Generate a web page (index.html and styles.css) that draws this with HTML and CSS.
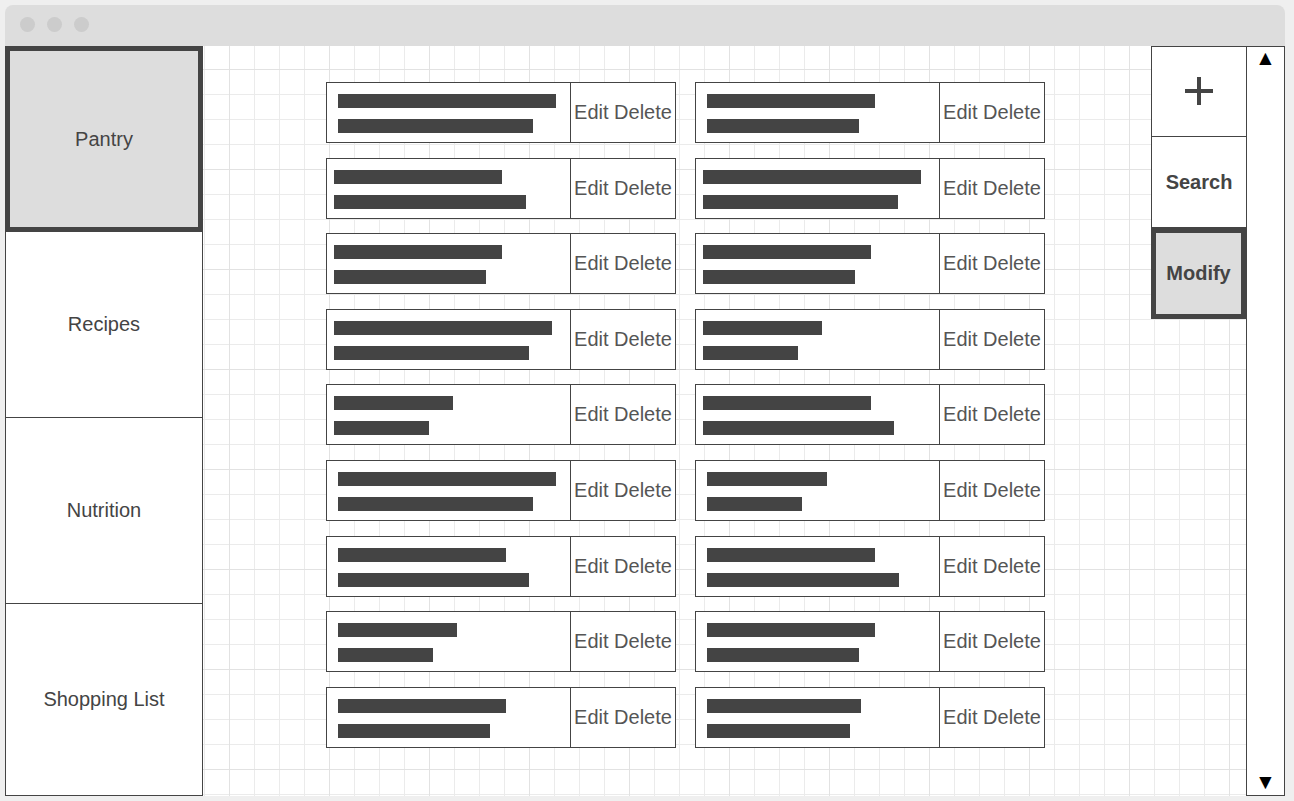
FILE: index.html
```html
<!DOCTYPE html>
<html lang="en">
<head>
    <meta charset="UTF-8">
    <meta name="viewport" content="width=device-width, initial-scale=1.0">
    <title>Pantry - Wireframe</title>
    <link rel="stylesheet" href="styles.css">
</head>
<body>
    <div class="window">
        <div class="titlebar">
            <span class="dot"></span>
            <span class="dot"></span>
            <span class="dot"></span>
        </div>
        <div class="frame">
            <nav class="sidebar">
                <div class="tab active">Pantry</div>
                <div class="tab">Recipes</div>
                <div class="tab">Nutrition</div>
                <div class="tab">Shopping List</div>
            </nav>

            <main class="content">
                <div class="list">
                    <!-- row 1 -->
                    <div class="card"><div class="info"><span class="bar" style="width:218px"></span><span class="bar" style="width:195px"></span></div><div class="actions">Edit Delete</div></div>
                    <div class="card"><div class="info"><span class="bar" style="width:168px"></span><span class="bar" style="width:152px"></span></div><div class="actions">Edit Delete</div></div>
                    <!-- row 2 -->
                    <div class="card"><div class="info tight"><span class="bar" style="width:168px"></span><span class="bar" style="width:192px"></span></div><div class="actions">Edit Delete</div></div>
                    <div class="card"><div class="info tight"><span class="bar" style="width:218px"></span><span class="bar" style="width:195px"></span></div><div class="actions">Edit Delete</div></div>
                    <!-- row 3 -->
                    <div class="card"><div class="info tight"><span class="bar" style="width:168px"></span><span class="bar" style="width:152px"></span></div><div class="actions">Edit Delete</div></div>
                    <div class="card"><div class="info tight"><span class="bar" style="width:168px"></span><span class="bar" style="width:152px"></span></div><div class="actions">Edit Delete</div></div>
                    <!-- row 4 -->
                    <div class="card"><div class="info tight"><span class="bar" style="width:218px"></span><span class="bar" style="width:195px"></span></div><div class="actions">Edit Delete</div></div>
                    <div class="card"><div class="info tight"><span class="bar" style="width:119px"></span><span class="bar" style="width:95px"></span></div><div class="actions">Edit Delete</div></div>
                    <!-- row 5 -->
                    <div class="card"><div class="info tight"><span class="bar" style="width:119px"></span><span class="bar" style="width:95px"></span></div><div class="actions">Edit Delete</div></div>
                    <div class="card"><div class="info tight"><span class="bar" style="width:168px"></span><span class="bar" style="width:191px"></span></div><div class="actions">Edit Delete</div></div>
                    <!-- row 6 -->
                    <div class="card"><div class="info"><span class="bar" style="width:218px"></span><span class="bar" style="width:195px"></span></div><div class="actions">Edit Delete</div></div>
                    <div class="card"><div class="info"><span class="bar" style="width:120px"></span><span class="bar" style="width:95px"></span></div><div class="actions">Edit Delete</div></div>
                    <!-- row 7 -->
                    <div class="card"><div class="info"><span class="bar" style="width:168px"></span><span class="bar" style="width:191px"></span></div><div class="actions">Edit Delete</div></div>
                    <div class="card"><div class="info"><span class="bar" style="width:168px"></span><span class="bar" style="width:192px"></span></div><div class="actions">Edit Delete</div></div>
                    <!-- row 8 -->
                    <div class="card"><div class="info"><span class="bar" style="width:119px"></span><span class="bar" style="width:95px"></span></div><div class="actions">Edit Delete</div></div>
                    <div class="card"><div class="info"><span class="bar" style="width:168px"></span><span class="bar" style="width:152px"></span></div><div class="actions">Edit Delete</div></div>
                    <!-- row 9 -->
                    <div class="card"><div class="info"><span class="bar" style="width:168px"></span><span class="bar" style="width:152px"></span></div><div class="actions">Edit Delete</div></div>
                    <div class="card"><div class="info"><span class="bar" style="width:154px"></span><span class="bar" style="width:143px"></span></div><div class="actions">Edit Delete</div></div>
                </div>
            </main>

            <aside class="tools">
                <div class="tool add">
                    <svg width="30" height="30" viewBox="0 0 30 30">
                        <rect x="1" y="12" width="28" height="4" fill="#444"/>
                        <rect x="13" y="0" width="4" height="28" fill="#444"/>
                    </svg>
                </div>
                <div class="tool">Search</div>
                <div class="tool active">Modify</div>
            </aside>

            <div class="scrollbar">
                <span>▲</span>
                <span>▼</span>
            </div>
        </div>
    </div>
</body>
</html>
```

FILE: styles.css
```css
html {
    background-color: #efefef;
}

body {
    font-family: "Liberation Sans", Arial, sans-serif;
    margin: 0;
    padding: 5px 0 0 5px;
    color: #444;
}

.window {
    width: 1280px;
    height: 791px;
    display: flex;
    flex-direction: column;
    border-radius: 8px 8px 0 0;
    background-color: #dddddd;
    overflow: hidden;
}

.titlebar {
    height: 41px;
    flex: none;
    display: flex;
    gap: 12px;
    padding: 12px 0 0 15px;
    box-sizing: border-box;
}

.dot {
    width: 15px;
    height: 15px;
    border-radius: 50%;
    background-color: #cccccc;
}

.frame {
    flex: 1;
    display: flex;
    background-color: #fff;
    background-image:
        linear-gradient(to right, #e2e2e2 1px, transparent 1px),
        linear-gradient(to bottom, #e2e2e2 1px, transparent 1px),
        linear-gradient(to right, #ebebeb 1px, transparent 1px),
        linear-gradient(to bottom, #ebebeb 1px, transparent 1px);
    background-size: 100px 100px, 100px 100px, 25px 25px, 25px 25px;
    background-position: 24px 23px, 24px 23px, -1px -2px, -1px -2px;
}

/* left navigation */
.sidebar {
    width: 198px;
    flex: none;
    display: flex;
    flex-direction: column;
}

.tab {
    height: 186px;
    flex: none;
    box-sizing: border-box;
    display: flex;
    align-items: center;
    justify-content: center;
    font-size: 20px;
    color: #444;
    background-color: #fff;
    border: 1px solid #444;
    border-top: none;
}

.tab:last-child {
    flex: 1;
}

.tab.active {
    background-color: #dddddd;
    border: 5px solid #444;
}

/* pantry items */
.content {
    flex: 1;
    padding: 36px 0 0 123px;
}

.list {
    display: grid;
    grid-template-columns: 350px 350px;
    grid-auto-rows: 61px;
    column-gap: 19px;
    row-gap: 14.6px;
}

.card {
    display: flex;
}

.info {
    width: 245px;
    flex: none;
    box-sizing: border-box;
    border: 1px solid #444;
    background-color: #fff;
    padding: 11px 0 0 11px;
    display: flex;
    flex-direction: column;
    gap: 11px;
}

.info.tight {
    padding-left: 7px;
}

.bar {
    display: block;
    height: 14px;
    background-color: #444;
}

.actions {
    flex: 1;
    margin-left: -1px;
    border: 1px solid #444;
    background-color: #fff;
    display: flex;
    align-items: center;
    justify-content: center;
    font-size: 20px;
    color: #555;
    white-space: nowrap;
}

/* right tool column */
.tools {
    width: 95px;
    flex: none;
    display: flex;
    flex-direction: column;
    align-self: flex-start;
}

.tool {
    height: 91px;
    box-sizing: border-box;
    display: flex;
    align-items: center;
    justify-content: center;
    font-size: 20px;
    font-weight: bold;
    color: #444;
    background-color: #fff;
    border: 1px solid #444;
    border-top: none;
    border-right: none;
}

.tool.add {
    border-top: 1px solid #444;
}

.tool.active {
    background-color: #dddddd;
    border: 5px solid #444;
}

.scrollbar {
    width: 39px;
    flex: none;
    box-sizing: border-box;
    border: 1px solid #444;
    background-color: #fff;
    display: flex;
    flex-direction: column;
    justify-content: space-between;
    align-items: center;
    padding: 0 0 2px;
    font-size: 21px;
    line-height: 22px;
    color: #000;
}
```
